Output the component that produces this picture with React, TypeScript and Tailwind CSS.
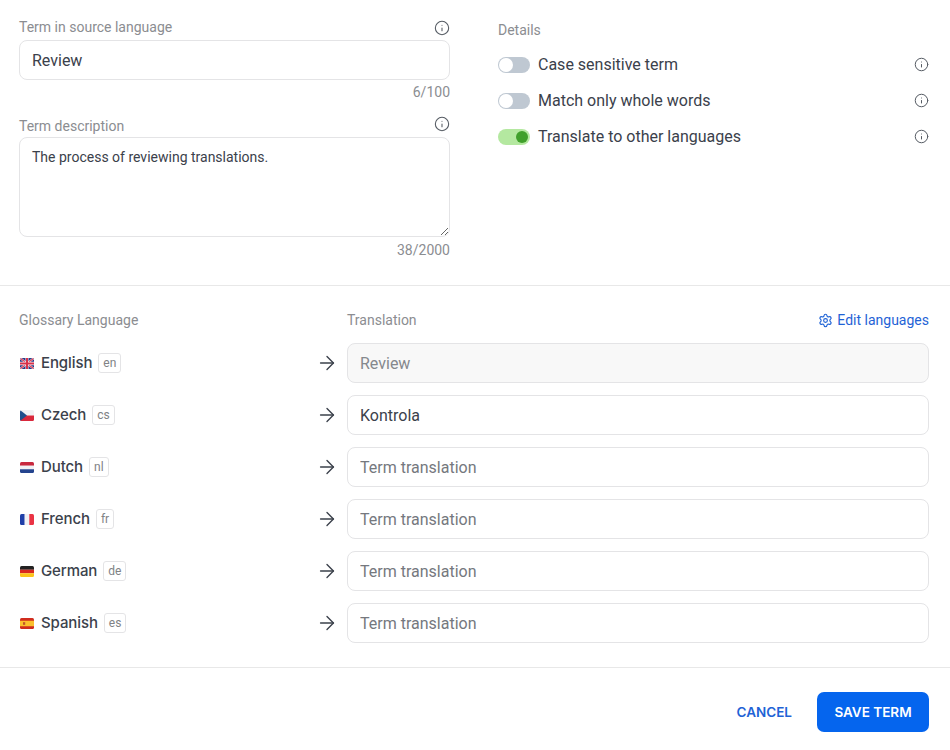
import { ArrowRight, Info, Settings } from 'lucide-react'
import type { ReactNode } from 'react'

function Flag({ children }: { children: ReactNode }) {
  return (
    <svg viewBox="0 0 14 10" preserveAspectRatio="none" className="ml-[1px] h-[11px] w-[14px] rounded-[1.5px]">
      {children}
    </svg>
  )
}

const FlagGb = () => (
  <Flag>
    <rect width="14" height="10" fill="#2a3a86" />
    <path d="M0 0l14 10M14 0L0 10" stroke="#f4f4f6" strokeWidth="1.8" />
    <path d="M0 0l14 10M14 0L0 10" stroke="#d8304a" strokeWidth="1" />
    <path d="M7 0v10M0 5h14" stroke="#f4f4f6" strokeWidth="3" />
    <path d="M7 0v10M0 5h14" stroke="#d8304a" strokeWidth="2" />
  </Flag>
)

const FlagCz = () => (
  <Flag>
    <rect width="14" height="5" fill="#f1f1f4" />
    <rect y="5" width="14" height="5" fill="#d9283c" />
    <path d="M0 0l7 5-7 5z" fill="#1f4e8c" />
  </Flag>
)

const FlagNl = () => (
  <Flag>
    <rect width="14" height="3.4" fill="#c8283e" />
    <rect y="3.4" width="14" height="3.2" fill="#f1f1f4" />
    <rect y="6.6" width="14" height="3.4" fill="#24448e" />
  </Flag>
)

const FlagFr = () => (
  <Flag>
    <rect width="4.7" height="10" fill="#1f3fa8" />
    <rect x="4.7" width="4.6" height="10" fill="#f1f1f4" />
    <rect x="9.3" width="4.7" height="10" fill="#ea3344" />
  </Flag>
)

const FlagDe = () => (
  <Flag>
    <rect width="14" height="3.4" fill="#222" />
    <rect y="3.4" width="14" height="3.2" fill="#d9281e" />
    <rect y="6.6" width="14" height="3.4" fill="#fcc419" />
  </Flag>
)

const FlagEs = () => (
  <Flag>
    <rect width="14" height="10" fill="#d02c1e" />
    <rect y="2.5" width="14" height="5" fill="#fbc02d" />
    <rect x="3" y="3.8" width="2.2" height="2.4" fill="#c0542a" />
  </Flag>
)

const languages: { name: string; code: string; flag: ReactNode; value?: string; disabled?: boolean }[] = [
  { name: 'English', code: 'en', flag: <FlagGb />, value: 'Review', disabled: true },
  { name: 'Czech', code: 'cs', flag: <FlagCz />, value: 'Kontrola' },
  { name: 'Dutch', code: 'nl', flag: <FlagNl /> },
  { name: 'French', code: 'fr', flag: <FlagFr /> },
  { name: 'German', code: 'de', flag: <FlagDe /> },
  { name: 'Spanish', code: 'es', flag: <FlagEs /> },
]

const details = [
  { label: 'Case sensitive term', on: false },
  { label: 'Match only whole words', on: false },
  { label: 'Translate to other languages', on: true },
]

function Toggle({ on }: { on: boolean }) {
  return (
    <span
      className={`flex h-4 w-8 items-center rounded-full ${
        on ? 'justify-end bg-[#b4e8a0] pr-[2px]' : 'justify-start bg-[#bfc8d2] pl-[1px]'
      }`}
    >
      <span
        className={`rounded-full ${on ? 'size-3 bg-[#40a02b]' : 'size-[14px] bg-white'}`}
      />
    </span>
  )
}

export default function App() {
  return (
    <div className="flex h-[750px] w-[950px] flex-col overflow-hidden bg-white font-['Roboto',sans-serif] text-[#3b414b]">
      <section className="flex h-[286px] shrink-0 gap-[48px] border-b border-[#e8e8e8] pl-[19px] pr-[21px]">
        <div className="w-[431px]">
          <div className="flex h-[40px] items-center justify-between pt-[15px]">
            <label className="text-[14px] text-[#8b8d91]">Term in source language</label>
            <Info size={16} strokeWidth={1.6} className="text-[#555b63]" />
          </div>
          <input
            readOnly
            value="Review"
            className="h-[40px] w-full rounded-lg border border-[#e4e4e6] px-3 text-[16px] outline-none"
          />
          <p className="mt-[4px] text-right text-[14px] leading-[16px] text-[#8b8d91]">6/100</p>

          <div className="mt-[14px] flex h-[20px] items-center justify-between">
            <label className="pt-[4px] text-[14px] text-[#8b8d91]">Term description</label>
            <Info size={16} strokeWidth={1.6} className="text-[#555b63]" />
          </div>
          <textarea
            readOnly
            value="The process of reviewing translations."
            className="mt-[3px] block h-[100px] w-full rounded-lg border border-[#e4e4e6] px-3 py-[10px] text-[14px] leading-[18px] outline-none"
          />
          <p className="mt-[5px] text-right text-[14px] leading-[16px] text-[#8b8d91]">38/2000</p>
        </div>

        <div className="flex-1 pt-[22px]">
          <p className="text-[14px] leading-[16px] text-[#8b8d91]">Details</p>
          <div className="mt-[8px] flex flex-col">
            {details.map((d) => (
              <div key={d.label} className="flex h-[36px] items-center gap-2 pt-[2px]">
                <Toggle on={d.on} />
                <span className="flex-1 text-[16px]">{d.label}</span>
                <Info size={15} strokeWidth={1.6} className="-mt-[1px] text-[#555b63]" />
              </div>
            ))}
          </div>
        </div>
      </section>

      <section className="h-[382px] shrink-0 border-b border-[#e8e8e8] pl-[19px] pr-[21px] pt-[24px]">
        <div className="flex h-[20px] items-center text-[14px] text-[#8b8d91]">
          <span className="w-[328px]">Glossary Language</span>
          <span className="flex-1">Translation</span>
          <a className="flex items-center gap-[4px] text-[#1f63d6]">
            <Settings size={15} strokeWidth={1.8} />
            Edit languages
          </a>
        </div>
        <div className="mt-[13px] flex flex-col gap-[12px]">
          {languages.map((l) => (
            <div key={l.code} className="flex h-[40px] items-center">
              <div className="flex w-[297px] items-center font-['Inter',sans-serif]">
                {l.flag}
                <span className="ml-[7px] text-[15px] font-medium tracking-[-0.1px] text-[#3b414b]">{l.name}</span>
                <span className="ml-[6px] flex h-[20px] items-center rounded-[3px] border border-[#e4e4e6] px-[4px] font-['Roboto',sans-serif] text-[12px] text-[#808285]">
                  {l.code}
                </span>
              </div>
              <ArrowRight size={22} strokeWidth={1.5} className="text-[#3b414b]" />
              <input
                readOnly
                value={l.value ?? ''}
                placeholder="Term translation"
                className={`ml-[9px] h-[40px] flex-1 rounded-lg border border-[#e4e4e6] px-3 text-[16px] outline-none placeholder:text-[#75787e] ${
                  l.disabled ? 'bg-[#f8f8f8] text-[#85888d]' : 'bg-white'
                }`}
              />
            </div>
          ))}
        </div>
      </section>

      <footer className="flex flex-1 items-start justify-end gap-[8px] pr-[21px] pt-[24px] font-['Inter',sans-serif] text-[13.5px] font-semibold">
        <button className="h-[40px] px-[17px] text-[#1f63d6]">CANCEL</button>
        <button className="h-[40px] w-[112px] rounded-[7px] bg-[#0565ee] text-white">SAVE TERM</button>
      </footer>
    </div>
  )
}
